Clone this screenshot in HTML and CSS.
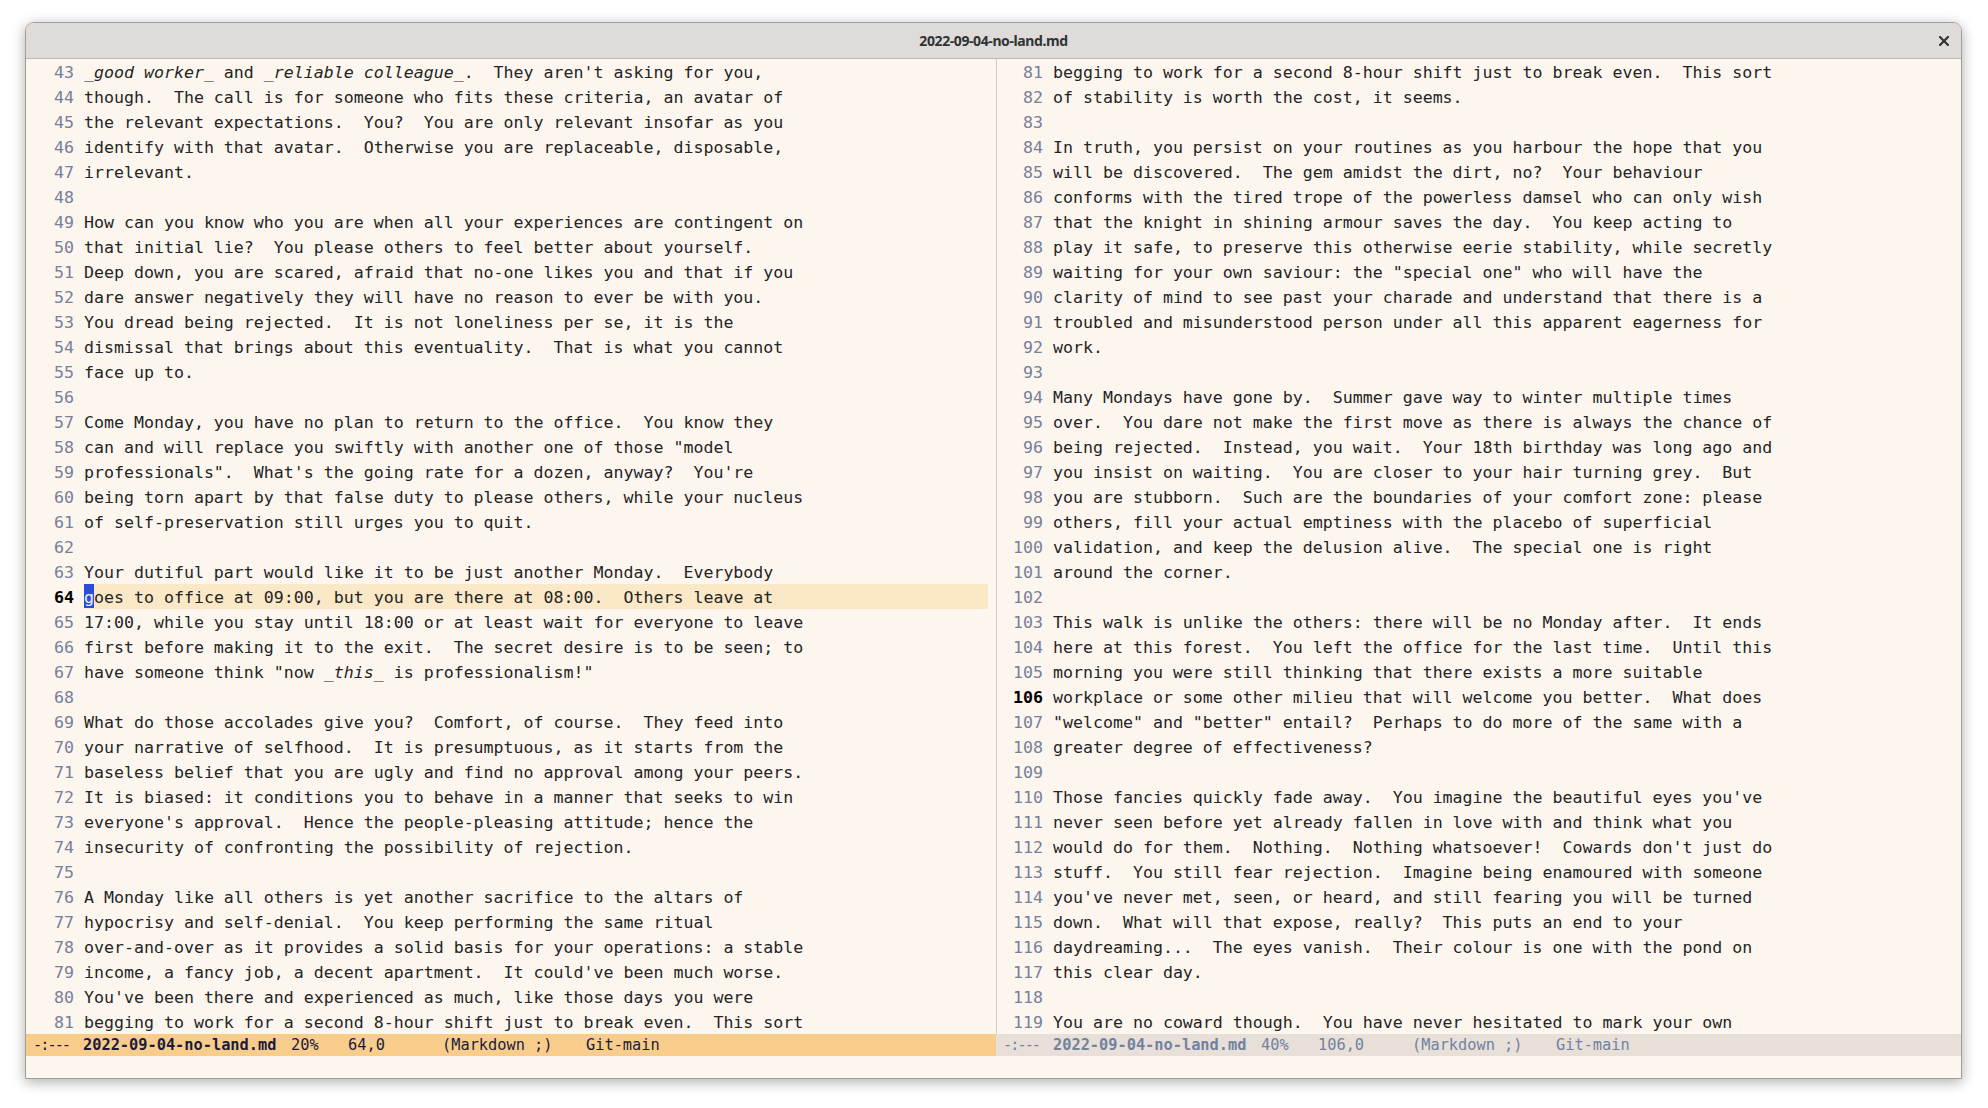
FILE: index.html
```html
<!DOCTYPE html>
<html>
<head>
<meta charset="utf-8">
<title>2022-09-04-no-land.md</title>
<link rel="stylesheet" href="styles.css">
</head>
<body>
<div class="window">
  <div class="titlebar">
    <span></span>
    <span class="title">2022-09-04-no-land.md</span>
    <span class="close"><svg width="10" height="10" viewBox="0 0 10 10"><path d="M1 1 L9 9 M9 1 L1 9" stroke="#2e3436" stroke-width="2.2" stroke-linecap="square"/></svg></span>
  </div>
  <div class="panes">
    <div class="pane left">
      <div class="text">
<div class="ln"><span class="num">43</span><span class="tx"><i>_good worker_</i> and <i>_reliable colleague_</i>.  They aren't asking for you,</span></div>
<div class="ln"><span class="num">44</span><span class="tx">though.  The call is for someone who fits these criteria, an avatar of</span></div>
<div class="ln"><span class="num">45</span><span class="tx">the relevant expectations.  You?  You are only relevant insofar as you</span></div>
<div class="ln"><span class="num">46</span><span class="tx">identify with that avatar.  Otherwise you are replaceable, disposable,</span></div>
<div class="ln"><span class="num">47</span><span class="tx">irrelevant.</span></div>
<div class="ln"><span class="num">48</span><span class="tx"></span></div>
<div class="ln"><span class="num">49</span><span class="tx">How can you know who you are when all your experiences are contingent on</span></div>
<div class="ln"><span class="num">50</span><span class="tx">that initial lie?  You please others to feel better about yourself.</span></div>
<div class="ln"><span class="num">51</span><span class="tx">Deep down, you are scared, afraid that no-one likes you and that if you</span></div>
<div class="ln"><span class="num">52</span><span class="tx">dare answer negatively they will have no reason to ever be with you.</span></div>
<div class="ln"><span class="num">53</span><span class="tx">You dread being rejected.  It is not loneliness per se, it is the</span></div>
<div class="ln"><span class="num">54</span><span class="tx">dismissal that brings about this eventuality.  That is what you cannot</span></div>
<div class="ln"><span class="num">55</span><span class="tx">face up to.</span></div>
<div class="ln"><span class="num">56</span><span class="tx"></span></div>
<div class="ln"><span class="num">57</span><span class="tx">Come Monday, you have no plan to return to the office.  You know they</span></div>
<div class="ln"><span class="num">58</span><span class="tx">can and will replace you swiftly with another one of those "model</span></div>
<div class="ln"><span class="num">59</span><span class="tx">professionals".  What's the going rate for a dozen, anyway?  You're</span></div>
<div class="ln"><span class="num">60</span><span class="tx">being torn apart by that false duty to please others, while your nucleus</span></div>
<div class="ln"><span class="num">61</span><span class="tx">of self-preservation still urges you to quit.</span></div>
<div class="ln"><span class="num">62</span><span class="tx"></span></div>
<div class="ln"><span class="num">63</span><span class="tx">Your dutiful part would like it to be just another Monday.  Everybody</span></div>
<div class="ln"><span class="num current">64</span><span class="tx hl"><span class="cursor">g</span>oes to office at 09:00, but you are there at 08:00.  Others leave at</span></div>
<div class="ln"><span class="num">65</span><span class="tx">17:00, while you stay until 18:00 or at least wait for everyone to leave</span></div>
<div class="ln"><span class="num">66</span><span class="tx">first before making it to the exit.  The secret desire is to be seen; to</span></div>
<div class="ln"><span class="num">67</span><span class="tx">have someone think "now <i>_this_</i> is professionalism!"</span></div>
<div class="ln"><span class="num">68</span><span class="tx"></span></div>
<div class="ln"><span class="num">69</span><span class="tx">What do those accolades give you?  Comfort, of course.  They feed into</span></div>
<div class="ln"><span class="num">70</span><span class="tx">your narrative of selfhood.  It is presumptuous, as it starts from the</span></div>
<div class="ln"><span class="num">71</span><span class="tx">baseless belief that you are ugly and find no approval among your peers.</span></div>
<div class="ln"><span class="num">72</span><span class="tx">It is biased: it conditions you to behave in a manner that seeks to win</span></div>
<div class="ln"><span class="num">73</span><span class="tx">everyone's approval.  Hence the people-pleasing attitude; hence the</span></div>
<div class="ln"><span class="num">74</span><span class="tx">insecurity of confronting the possibility of rejection.</span></div>
<div class="ln"><span class="num">75</span><span class="tx"></span></div>
<div class="ln"><span class="num">76</span><span class="tx">A Monday like all others is yet another sacrifice to the altars of</span></div>
<div class="ln"><span class="num">77</span><span class="tx">hypocrisy and self-denial.  You keep performing the same ritual</span></div>
<div class="ln"><span class="num">78</span><span class="tx">over-and-over as it provides a solid basis for your operations: a stable</span></div>
<div class="ln"><span class="num">79</span><span class="tx">income, a fancy job, a decent apartment.  It could've been much worse.</span></div>
<div class="ln"><span class="num">80</span><span class="tx">You've been there and experienced as much, like those days you were</span></div>
<div class="ln"><span class="num">81</span><span class="tx">begging to work for a second 8-hour shift just to break even.  This sort</span></div>
      </div>
      <div class="modeline active">
        <span class="seg s1">-:---</span><span class="seg s2 bold">2022-09-04-no-land.md</span><span class="seg s3">20%</span><span class="seg s4">64,0</span><span class="seg s5">(Markdown ;)</span><span class="seg s6">Git-main</span>
      </div>
    </div>
    <div class="pane right">
      <div class="text">
<div class="ln"><span class="num">81</span><span class="tx">begging to work for a second 8-hour shift just to break even.  This sort</span></div>
<div class="ln"><span class="num">82</span><span class="tx">of stability is worth the cost, it seems.</span></div>
<div class="ln"><span class="num">83</span><span class="tx"></span></div>
<div class="ln"><span class="num">84</span><span class="tx">In truth, you persist on your routines as you harbour the hope that you</span></div>
<div class="ln"><span class="num">85</span><span class="tx">will be discovered.  The gem amidst the dirt, no?  Your behaviour</span></div>
<div class="ln"><span class="num">86</span><span class="tx">conforms with the tired trope of the powerless damsel who can only wish</span></div>
<div class="ln"><span class="num">87</span><span class="tx">that the knight in shining armour saves the day.  You keep acting to</span></div>
<div class="ln"><span class="num">88</span><span class="tx">play it safe, to preserve this otherwise eerie stability, while secretly</span></div>
<div class="ln"><span class="num">89</span><span class="tx">waiting for your own saviour: the "special one" who will have the</span></div>
<div class="ln"><span class="num">90</span><span class="tx">clarity of mind to see past your charade and understand that there is a</span></div>
<div class="ln"><span class="num">91</span><span class="tx">troubled and misunderstood person under all this apparent eagerness for</span></div>
<div class="ln"><span class="num">92</span><span class="tx">work.</span></div>
<div class="ln"><span class="num">93</span><span class="tx"></span></div>
<div class="ln"><span class="num">94</span><span class="tx">Many Mondays have gone by.  Summer gave way to winter multiple times</span></div>
<div class="ln"><span class="num">95</span><span class="tx">over.  You dare not make the first move as there is always the chance of</span></div>
<div class="ln"><span class="num">96</span><span class="tx">being rejected.  Instead, you wait.  Your 18th birthday was long ago and</span></div>
<div class="ln"><span class="num">97</span><span class="tx">you insist on waiting.  You are closer to your hair turning grey.  But</span></div>
<div class="ln"><span class="num">98</span><span class="tx">you are stubborn.  Such are the boundaries of your comfort zone: please</span></div>
<div class="ln"><span class="num">99</span><span class="tx">others, fill your actual emptiness with the placebo of superficial</span></div>
<div class="ln"><span class="num">100</span><span class="tx">validation, and keep the delusion alive.  The special one is right</span></div>
<div class="ln"><span class="num">101</span><span class="tx">around the corner.</span></div>
<div class="ln"><span class="num">102</span><span class="tx"></span></div>
<div class="ln"><span class="num">103</span><span class="tx">This walk is unlike the others: there will be no Monday after.  It ends</span></div>
<div class="ln"><span class="num">104</span><span class="tx">here at this forest.  You left the office for the last time.  Until this</span></div>
<div class="ln"><span class="num">105</span><span class="tx">morning you were still thinking that there exists a more suitable</span></div>
<div class="ln"><span class="num current">106</span><span class="tx">workplace or some other milieu that will welcome you better.  What does</span></div>
<div class="ln"><span class="num">107</span><span class="tx">"welcome" and "better" entail?  Perhaps to do more of the same with a</span></div>
<div class="ln"><span class="num">108</span><span class="tx">greater degree of effectiveness?</span></div>
<div class="ln"><span class="num">109</span><span class="tx"></span></div>
<div class="ln"><span class="num">110</span><span class="tx">Those fancies quickly fade away.  You imagine the beautiful eyes you've</span></div>
<div class="ln"><span class="num">111</span><span class="tx">never seen before yet already fallen in love with and think what you</span></div>
<div class="ln"><span class="num">112</span><span class="tx">would do for them.  Nothing.  Nothing whatsoever!  Cowards don't just do</span></div>
<div class="ln"><span class="num">113</span><span class="tx">stuff.  You still fear rejection.  Imagine being enamoured with someone</span></div>
<div class="ln"><span class="num">114</span><span class="tx">you've never met, seen, or heard, and still fearing you will be turned</span></div>
<div class="ln"><span class="num">115</span><span class="tx">down.  What will that expose, really?  This puts an end to your</span></div>
<div class="ln"><span class="num">116</span><span class="tx">daydreaming...  The eyes vanish.  Their colour is one with the pond on</span></div>
<div class="ln"><span class="num">117</span><span class="tx">this clear day.</span></div>
<div class="ln"><span class="num">118</span><span class="tx"></span></div>
<div class="ln"><span class="num">119</span><span class="tx">You are no coward though.  You have never hesitated to mark your own</span></div>
      </div>
      <div class="modeline inactive">
        <span class="seg s1">-:---</span><span class="seg s2 bold">2022-09-04-no-land.md</span><span class="seg s3">40%</span><span class="seg s4">106,0</span><span class="seg s5">(Markdown ;)</span><span class="seg s6">Git-main</span>
      </div>
    </div>
  </div>
  <div class="minibuffer"></div>
</div>
</body>
</html>
```

FILE: styles.css
```css
html, body {
  margin: 0;
  padding: 0;
  background: #ffffff;
}
body {
  width: 1988px;
  height: 1108px;
  overflow: hidden;
}
.window {
  margin: 22px 0 0 25px;
  width: 1937px;
  height: 1057px;
  box-sizing: border-box;
  border: 1px solid #a19d99;
  border-radius: 9px 9px 0 0;
  background: #fdf6ef;
  box-shadow: 0 3px 14px rgba(0, 0, 0, 0.33);
  display: flex;
  flex-direction: column;
  overflow: hidden;
}
.titlebar {
  height: 35px;
  flex: none;
  border-bottom: 1px solid #bdb7b1;
  background: #dedbd8;
  display: grid;
  grid-template-columns: 1fr auto 1fr;
  align-items: center;
}
.title {
  font-family: "Noto Sans", "DejaVu Sans", sans-serif;
  font-weight: 700;
  font-size: 14px;
  letter-spacing: -0.4px;
  color: #2e3436;
}
.close {
  justify-self: end;
  margin-right: 12px;
  display: flex;
  align-items: center;
}
.panes {
  display: flex;
  height: 997px;
  flex: none;
}
.pane {
  display: flex;
  flex-direction: column;
}
.pane.left {
  width: 970px;
  flex: none;
}
.pane.right {
  flex: 1;
  min-width: 0;
}
.text {
  height: 975px;
  overflow: hidden;
  padding-right: 8px;
  font-family: "DejaVu Sans Mono", "Liberation Mono", monospace;
  font-size: 16.6px;
  color: #242424;
}
.right .text {
  border-left: 1px solid #d2c8d2;
}
.ln {
  display: flex;
  height: 25px;
  line-height: 27px;
}
.num {
  flex: none;
  width: 48px;
  height: 25px;
  padding-right: 10px;
  text-align: right;
  color: #76809a;
  white-space: pre;
}
.right .num {
  width: 46px;
}
.num.current {
  color: #000000;
  font-weight: 700;
}
.tx {
  flex: 1;
  height: 25px;
  white-space: pre;
  overflow: hidden;
}
.tx i {
  font-style: italic;
}
.hl {
  background: #fae8c6;
}
.cursor {
  display: inline-block;
  background: #2a4fd6;
  color: #eef2ff;
  height: 24px;
  line-height: 27px;
  vertical-align: top;
}
.modeline {
  height: 22px;
  flex: none;
  display: flex;
  align-items: center;
  padding-left: 7px;
  font-family: "DejaVu Sans Mono", "Liberation Mono", monospace;
  font-size: 15.3px;
  white-space: pre;
}
.modeline.active {
  background: #f8cd8c;
  color: #1c1b3a;
}
.modeline.inactive {
  background: #e7dfd8;
  color: #7282a0;
}
.seg {
  flex: none;
}
.s1 { width: 50px; letter-spacing: -2px; }
.s2 { width: 208px; }
.s3 { width: 57px; }
.s4 { width: 94px; }
.s5 { width: 144px; }
.bold { font-weight: 700; }
.minibuffer {
  height: 22px;
  flex: none;
  background: #fdf6ef;
}
```
